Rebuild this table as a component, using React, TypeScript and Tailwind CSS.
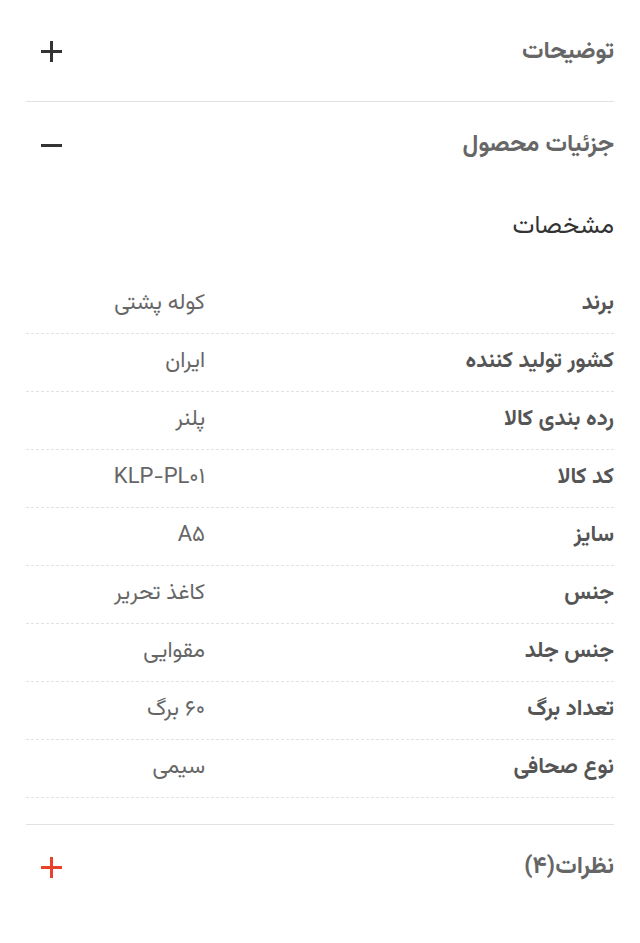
const specs: [string, string][] = [
  ['برند', 'کوله پشتی'],
  ['کشور تولید کننده', 'ایران'],
  ['رده بندی کالا', 'پلنر'],
  ['کد کالا', 'KLP-PL۰۱'],
  ['سایز', 'A۵'],
  ['جنس', 'کاغذ تحریر'],
  ['جنس جلد', 'مقوایی'],
  ['تعداد برگ', '۶۰ برگ'],
  ['نوع صحافی', 'سیمی'],
];

function Plus({ className }: { className: string }) {
  return (
    <svg viewBox="0 0 21 21" className={className} fill="none" stroke="currentColor" strokeWidth={3}>
      <path d="M10.5 0v21M0 10.5h21" />
    </svg>
  );
}

function Minus({ className }: { className: string }) {
  return (
    <svg viewBox="0 0 21 21" className={className} fill="none" stroke="currentColor" strokeWidth={3}>
      <path d="M0 10.5h21" />
    </svg>
  );
}

export default function App() {
  return (
    <div
      dir="rtl"
      className="min-h-[943px] bg-white px-[26px] font-['Vazirmatn','Noto_Sans_Arabic','DejaVu_Sans',sans-serif]"
    >
      <div className="flex h-[102px] items-center justify-between border-b border-[#e2e2e2] pt-[2px]">
        <h3 className="text-[24px] font-bold text-[#666]">توضیحات</h3>
        <Plus className="ml-[15px] h-[21px] w-[21px] text-[#333]" />
      </div>

      <div className="flex h-[86px] items-center justify-between">
        <h3 className="text-[24px] font-bold text-[#666]">جزئیات محصول</h3>
        <Minus className="ml-[15px] h-[21px] w-[21px] text-[#333]" />
      </div>

      <div className="pb-[26px]">
        <h4 className="mb-[30px] mt-[20px] text-[25px] text-[#333]">مشخصات</h4>
        <div>
          {specs.map(([k, v]) => (
            <div key={k} className="flex h-[58px] items-center border-b border-dashed border-[#e2e2e2] pb-[2px]">
              <div className="w-[409px] shrink-0 text-[22px] font-bold text-[#555]">{k}</div>
              <div className="text-[22px] text-[#666]">{v}</div>
            </div>
          ))}
        </div>
      </div>

      <div className="flex h-[86px] items-center justify-between border-t border-[#e2e2e2]">
        <h3 className="text-[24px] font-bold text-[#666]">نظرات(۴)</h3>
        <Plus className="ml-[15px] h-[21px] w-[21px] text-[#e8432a]" />
      </div>
    </div>
  );
}
